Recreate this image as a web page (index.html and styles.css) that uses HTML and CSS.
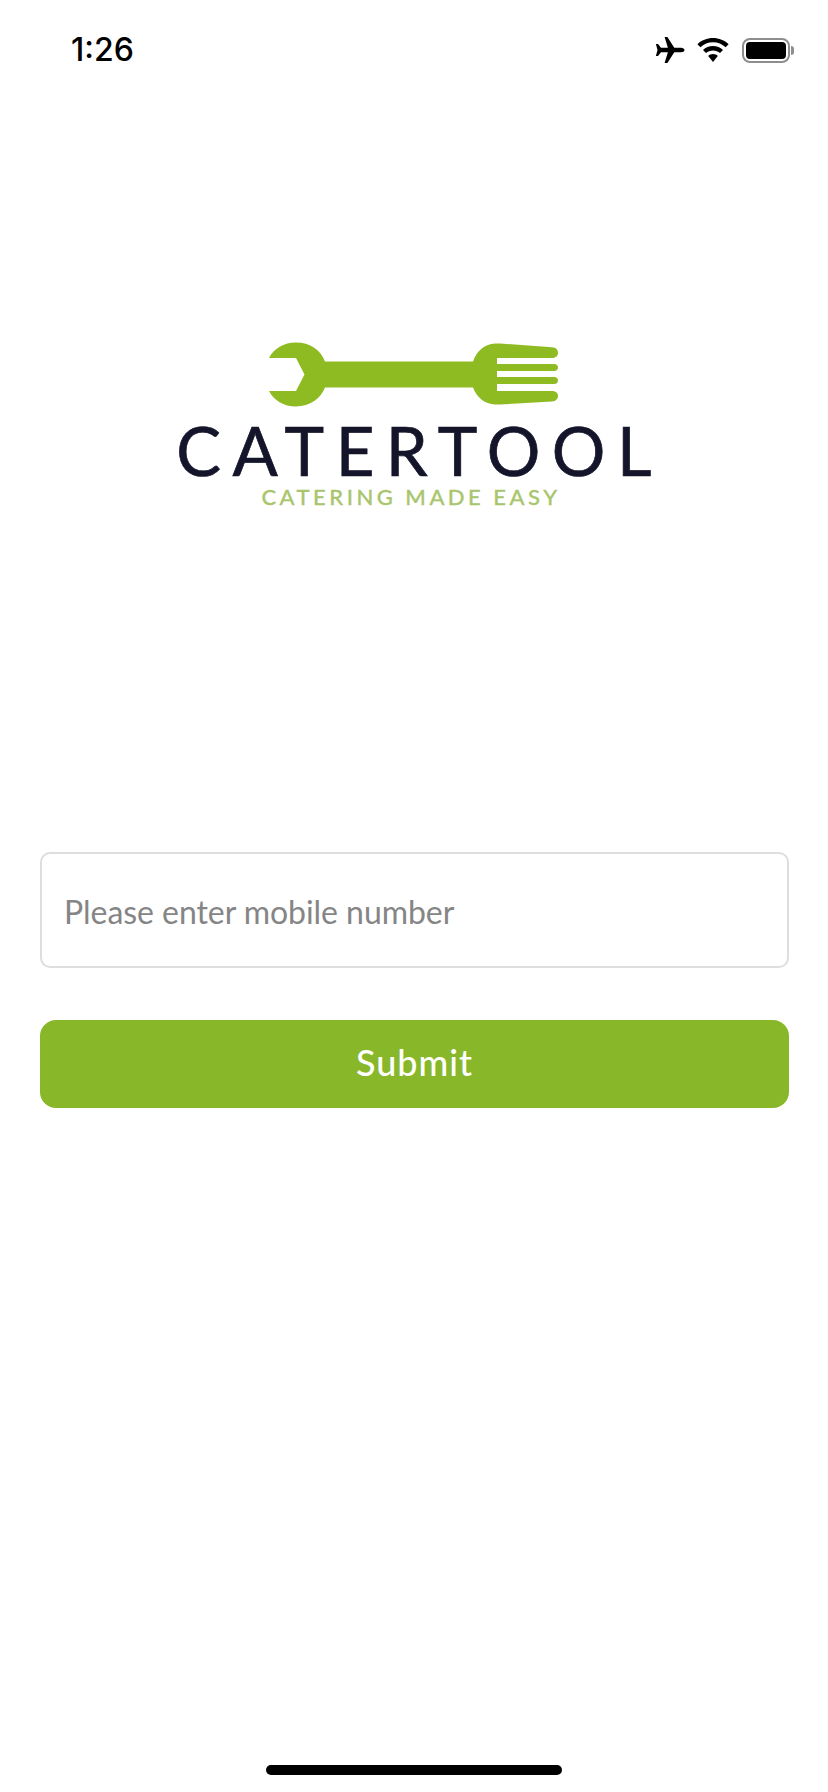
FILE: index.html
```html
<!DOCTYPE html>
<html lang="en">
<head>
<meta charset="utf-8">
<title>Catertool</title>
<link rel="stylesheet" href="styles.css">
</head>
<body>
<div class="screen">
  <header class="status">
    <span class="time">1:26</span>
    <div class="status-icons">
      <svg class="plane" width="30" height="26" viewBox="0 0 30 26"><path d="M29.500 13c0-1.300-1.600-2.300-3.600-2.300h-6.600L12.400 0H9.600l3.300 10.700H6L3 7H.9l1.600 6-1.600 6H3l3-3.700h6.900L9.600 26h2.800l6.900-10.700h6.600c2 0 3.600-1 3.600-2.300z"/></svg>
      <svg class="wifi" width="32" height="24" viewBox="0 0 32 24"><path d="M16 0c6 0 11.500 2.300 15.600 6.200l-3 3.100C25.300 6.200 20.900 4.300 16 4.300S6.700 6.200 3.400 9.300l-3-3.100C4.500 2.300 10 0 16 0z"/><path d="M16 8.100c3.900 0 7.400 1.500 10 3.900l-3 3.100c-1.800-1.700-4.300-2.700-7-2.700s-5.200 1-7 2.700l-3-3.100c2.600-2.400 6.100-3.900 10-3.900z"/><path d="M16 16c1.900 0 3.600.7 4.800 1.900L16 24l-4.800-6.100c1.200-1.200 2.900-1.900 4.800-1.900z"/></svg>
      <div class="battery"><div class="battery-body"><div class="battery-fill"></div></div><div class="battery-tip"></div></div>
    </div>
  </header>

  <div class="logo">
    <svg class="logo-mark" width="292" height="66" viewBox="0 0 292 66">
      <path d="M2 17H29L37.500 33.500 29 50H2C7 59.500 16.500 65.500 29 65.500 43 65.500 54 57 58 46.500H206C210 57 218 63 228 63.500L233 63.500 285 60.500C289 60.300 291 57.500 291 55 291 52.500 289 50 285 50H230V43H287C290 43 291 41 291 39.500 291 38 290 36 287 36H230V30H287C290 30 291 28 291 26.500 291 25 290 23 287 23H230V17H285C289 17 291 14.500 291 12 291 9 289 6.500 285 6.300L233 2.500H228C218 3 210 9 206 20.500H58C54 9 43 1.500 29 1.500 16.500 1.500 7 7.500 2 17Z"/>
    </svg>
    <div class="logo-name">CATERTOOL</div>
    <div class="logo-tag">CATERING MADE EASY</div>
  </div>

  <form class="login">
    <input class="phone" type="text" placeholder="Please enter mobile number">
    <button class="submit" type="button">Submit</button>
  </form>

  <div class="home-bar"></div>
</div>
</body>
</html>
```
FILE: styles.css
```css
* { box-sizing: border-box; }
html, body { margin: 0; padding: 0; background: #fff; }
.screen {
  width: 828px;
  height: 1792px;
  display: flex;
  flex-direction: column;
  overflow: hidden;
}
.status {
  height: 100px;
  flex: none;
  display: flex;
  align-items: center;
  justify-content: space-between;
  padding: 0 34px 0 71px;
}
.time {
  font: 500 32px/1 Inter, sans-serif;
  color: #000;
}
.status-icons {
  display: flex;
  align-items: center;
}
.plane { margin-right: 12px; }
.wifi { margin-right: 13px; }
.battery { display: flex; align-items: center; }
.battery-body {
  width: 48px;
  height: 25px;
  border: 2.500px solid #8e8e8e;
  border-radius: 8px;
  padding: 2px;
}
.battery-fill {
  width: 100%;
  height: 100%;
  background: #000;
  border-radius: 4px;
}
.battery-tip {
  width: 3px;
  height: 9px;
  margin-left: 1px;
  background: #8e8e8e;
  border-radius: 0 3px 3px 0;
}
.logo {
  margin-top: 241px;
  display: flex;
  flex-direction: column;
  align-items: center;
  height: 167px;
  flex: none;
}
.logo-mark {
  fill: #8fbb22;
  flex: none;
  margin-left: -2px;
  display: block;
}
.logo-name {
  margin-top: 10px;
  font: 400 67px/1 Lato, sans-serif;
  letter-spacing: 11.500px;
  margin-right: -11px;
  color: #14142a;
  -webkit-text-stroke: 0.7px #14142a;
}
.logo-tag {
  margin-top: 2px;
  margin-right: 6px;
  font: 500 22px/1 Lato, sans-serif;
  letter-spacing: 3.500px;
  color: #a9c56d;
  -webkit-text-stroke: 0.3px #a9c56d;
}
.login {
  margin-top: 344px;
  padding: 0 39px 0 40px;
  display: flex;
  flex-direction: column;
  gap: 52px;
}
.phone {
  display: block;
  width: 100%;
  height: 116px;
  border: 2px solid #dedede;
  border-radius: 10px;
  padding: 2px 22px 0;
  background: #fff;
  font: 400 32px Lato, sans-serif;
  letter-spacing: -0.05px;
  outline: none;
}
.phone::placeholder { color: #858585; opacity: 1; }
.submit {
  display: block;
  width: 100%;
  height: 88px;
  border: 0;
  border-radius: 16px;
  padding: 0 0 4px;
  background: #88b82a;
  color: #fff;
  font: 500 36px Lato, sans-serif;
  letter-spacing: 1px;
}
.home-bar {
  margin: auto auto 17px;
  width: 296px;
  height: 10px;
  border-radius: 5px;
  background: #000;
}
```
